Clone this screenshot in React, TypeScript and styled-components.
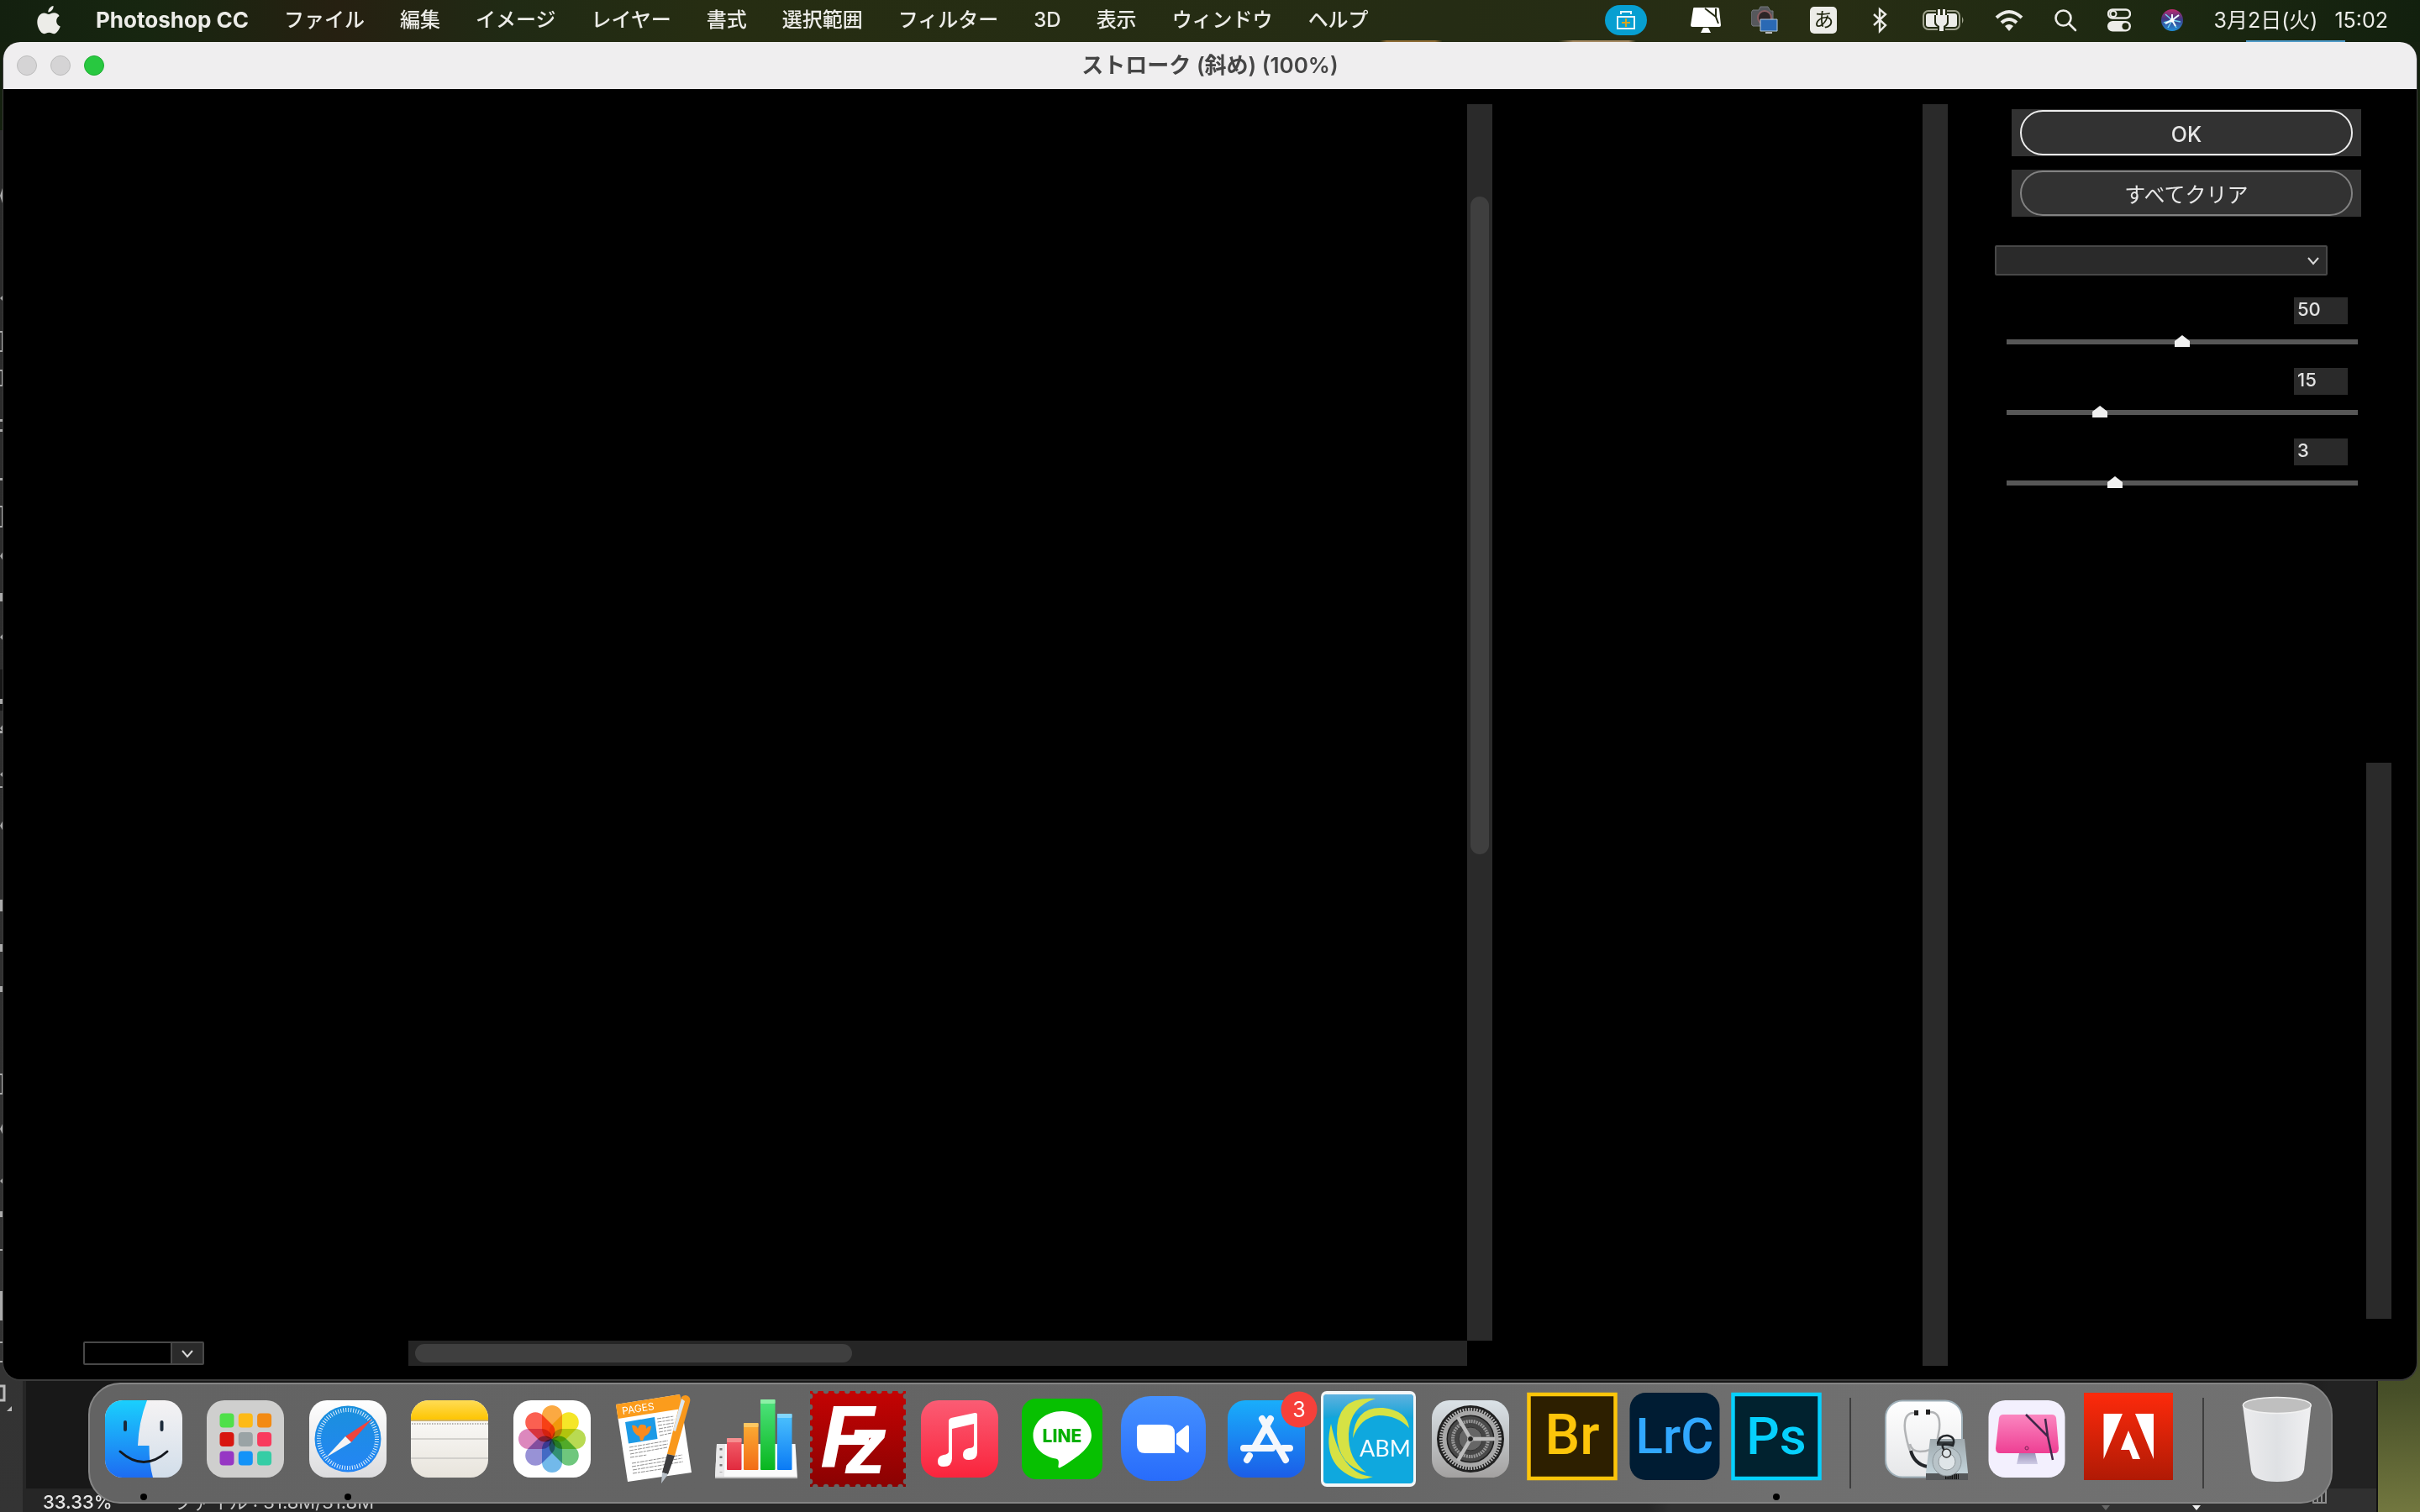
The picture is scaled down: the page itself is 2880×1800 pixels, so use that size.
import React from "react";
import styled, { createGlobalStyle } from "styled-components";

const Global = createGlobalStyle`
  *, *::before, *::after { box-sizing: border-box; }
  body {
    margin: 0;
    background: #16220f;
    font-family: Inter, "Noto Sans CJK JP", sans-serif;
    overflow: hidden;
  }
  button, input, select { font: inherit; color: inherit; margin: 0; }
`;

/* ---------- desktop ---------- */

const Desktop = styled.div`
  position: relative;
  display: grid;
  grid-template-rows: 50px minmax(0, 1fr) 158px;
  height: 100vh;
  background: linear-gradient(180deg, #14200f 0%, #1b2812 50%, #2a3517 80%, #474f28 92%, #72773f 100%);
`;

const AppBehind = styled.div`
  position: absolute;
  inset: 155px 50px 0 0;
  display: grid;
  grid-template-columns: 27px minmax(0, 1fr);
  background: #1b1b1b;
  border-right: 2px solid #121212;
`;

const ToolStrip = styled.div`
  background: linear-gradient(180deg, #2a2a2a, #343434);
  svg { display: block; }
`;

const CanvasBehind = styled.div`
  display: flex;
  flex-direction: column;
  justify-content: flex-end;
  border-left: 4px solid #262626;
  background: linear-gradient(90deg, #181818 96%, #222222 98%);
`;

const StatusBar = styled.div`
  display: flex;
  align-items: center;
  height: 28px;
  padding: 4px 0 0 20px;
  gap: 73px;
  background: linear-gradient(90deg, #262626 0 69%, #303030 70%);
  color: #c8c8c8;
  font-size: 22px;
  line-height: 24px;
  white-space: nowrap;
  strong { font-weight: 500; color: #e6e6e6; }
  svg { margin-left: auto; }
`;

/* ---------- menu bar ---------- */

const MenuBar = styled.header`
  position: relative;
  display: flex;
  justify-content: space-between;
  align-items: center;
  padding: 0 38px 2px 44px;
  background:
    linear-gradient(90deg, transparent 57%, #8d6c35 57.3% 59.3%, transparent 59.6% 64.4%, #a58a62 65% 67.3%, transparent 67.6% 92.8%, #4f9bc8 92.8% 96.9%, transparent 96.9%) 0 100% / 100% 2px no-repeat,
    linear-gradient(90deg, #13200f 0%, #172610 6%, #262011 14%, #202a14 21%, #262d12 29%, #252c14 60%, #282e14 75%, #1c2811 90%, #12200e 100%);
  color: #ecece8;
`;

const Menus = styled.nav`
  display: flex;
  align-items: center;
  gap: 42px;
`;

const MenuItem = styled.button<{ $strong?: boolean }>`
  padding: 0;
  border: 0;
  background: none;
  font-size: ${(p) => (p.$strong ? 26 : 24)}px;
  font-weight: ${(p) => (p.$strong ? 700 : 500)};
  line-height: 36px;
  white-space: nowrap;
  svg { display: block; }
`;

const StatusItems = styled.div`
  display: flex;
  align-items: center;
  gap: 36px;
  svg { display: block; }
`;

const ToolkitPill = styled.span`
  display: grid;
  place-items: center;
  width: 50px;
  height: 36px;
  margin-right: 16px;
  border-radius: 18px;
  background: #079fd1;
`;

const InputMode = styled.span`
  display: grid;
  place-items: center;
  width: 32px;
  height: 32px;
  border-radius: 5px;
  background: #ecece8;
  color: #20260f;
  font-size: 24px;
  line-height: 30px;
`;

const Clock = styled.time`
  display: flex;
  gap: 20px;
  font-size: 25px;
  line-height: 36px;
  white-space: nowrap;
`;

/* ---------- dialog window ---------- */

const Window = styled.section`
  position: relative;
  display: flex;
  flex-direction: column;
  min-height: 0;
  margin: 0 4px;
  border-radius: 20px;
  overflow: hidden;
  background: #000;
  box-shadow: 0 1px 0 1px #3a3a3a;
`;

const TitleBar = styled.div`
  display: grid;
  grid-template-columns: 1fr auto 1fr;
  align-items: center;
  height: 56px;
  flex: none;
  padding: 0 16px;
  background: #efeeef;
`;

const Lights = styled.div`
  display: flex;
  gap: 16px;
`;

const Light = styled.button<{ $on?: boolean }>`
  width: 24px;
  height: 24px;
  padding: 0;
  border-radius: 50%;
  border: 1px solid ${(p) => (p.$on ? "#1fae33" : "#bcbcbc")};
  background: ${(p) => (p.$on ? "#28c840" : "#d5d4d5")};
`;

const Title = styled.h1`
  margin: 0;
  color: #454545;
  font-size: 26px;
  font-weight: 600;
  line-height: 36px;
`;

const Body = styled.div`
  flex: 1;
  min-height: 0;
  display: grid;
  grid-template-columns: minmax(0, 1fr) 542px 558px;
  padding: 18px 0 16px;
`;

const Preview = styled.div`
  display: grid;
  grid-template: minmax(0, 1fr) 30px / minmax(0, 1fr) 30px;
`;

const PreviewFooter = styled.div`
  display: flex;
  align-items: center;
  gap: 243px;
  padding-left: 95px;
`;

const TrackV = styled.div<{ $rows?: string }>`
  display: grid;
  grid-template-rows: ${(p) => p.$rows ?? "1fr"};
  width: 30px;
  height: 100%;
  padding: 0 4px;
  background: #2a2a2a;
`;

const TrackH = styled.div`
  display: grid;
  flex: 1;
  grid-template-columns: 520fr 728fr;
  height: 30px;
  padding: 4px 4px 4px 8px;
  background: #252525;
`;

const Thumb = styled.div`
  grid-row: 2;
  border-radius: 11px;
  background: #3f3f3f;
`;

const ThumbH = styled(Thumb)`
  grid-row: 1;
`;

const EffectList = styled.div`
  display: flex;
  justify-content: flex-end;
`;

const SelectBox = styled.div<{ $small?: boolean }>`
  display: grid;
  grid-template-columns: minmax(0, 1fr) ${(p) => (p.$small ? 38 : 30)}px;
  width: ${(p) => (p.$small ? 144 : 396)}px;
  height: ${(p) => (p.$small ? 28 : 36)}px;
  border: 2px solid #484848;
  border-radius: 2px;
  background: ${(p) => (p.$small ? "#000" : "#2a2a2a")};
  select {
    grid-area: 1 / 1 / 2 / 3;
    appearance: none;
    width: 100%;
    padding: 0 6px;
    border: 0;
    background: none;
    color: #e6e6e6;
    font-size: 20px;
  }
  svg {
    grid-area: 1 / 2;
    width: 100%;
    height: 100%;
    pointer-events: none;
    background: #2a2a2a;
    border-left: ${(p) => (p.$small ? "2px solid #484848" : "0")};
  }
`;

/* ---------- controls ---------- */

const Controls = styled.form`
  display: flex;
  flex-direction: column;
  padding: 6px 66px 0 56px;
  color: #e2e2e2;
`;

const ButtonPlate = styled.div`
  align-self: flex-end;
  width: 416px;
  height: 56px;
  margin-bottom: 16px;
  padding: 1px 10px;
  background: #323232;
`;

const PillButton = styled.button<{ $primary?: boolean }>`
  display: block;
  width: 100%;
  height: 54px;
  padding: 3px 0 0;
  border: 2px solid ${(p) => (p.$primary ? "#ededed" : "#828282")};
  border-radius: 27px;
  background: #323232;
  color: #e8e8e8;
  font-size: 25px;
  font-weight: ${(p) => (p.$primary ? 500 : 400)};
  line-height: 40px;
`;

const SelectRow = styled.div`
  margin: 18px 0 26px;
`;

const SliderGroup = styled.div`
  display: flex;
  flex-direction: column;
  align-items: flex-end;
  height: 84px;
`;

const ValueInput = styled.input`
  width: 64px;
  height: 32px;
  margin-right: 16px;
  padding: 0 0 4px 4px;
  border: 0;
  border-radius: 0;
  background: #2a2a2a;
  font-size: 22px;
  font-weight: 500;
  line-height: 28px;
`;

const Range = styled.input`
  appearance: none;
  width: 418px;
  height: 14px;
  margin: 13px 4px 0 0;
  background: linear-gradient(#575757, #575757) 0 5px / 100% 6px no-repeat;
  align-self: flex-end;
  &::-webkit-slider-thumb {
    appearance: none;
    width: 18px;
    height: 14px;
    border: 0;
    background: #f0f0f0;
    clip-path: polygon(50% 0, 100% 50%, 100% 100%, 0 100%, 0 50%);
  }
`;

const StackArea = styled.div`
  flex: 1;
  display: flex;
  justify-content: flex-end;
  margin: 302px -36px 56px 0;
`;

/* ---------- dock ---------- */

const DockArea = styled.footer`
  position: relative;
  padding: 4px 104px 10px 105px;
`;

const DockBar = styled.div`
  display: flex;
  height: 144px;
  padding: 5px 3px 0;
  border: 2px solid #858585;
  border-radius: 38px;
  background: linear-gradient(90deg, #636363 0%, #656565 55%, #6f6f6f 75%, #717171 100%);
`;

const Slot = styled.button`
  flex: 1;
  min-width: 0;
  display: flex;
  flex-direction: column;
  align-items: center;
  padding: 0;
  border: 0;
  background: none;
  svg { display: block; flex: none; overflow: visible; }
`;

const Running = styled.span`
  width: 8px;
  height: 8px;
  margin-top: 5px;
  border-radius: 50%;
  background: #000;
`;

const Divider = styled.span`
  flex: none;
  width: 55px;
  height: 108px;
  margin-top: 11px;
  background: linear-gradient(#3e3e3e, #3e3e3e) center / 2px 100% no-repeat;
`;

/* ---------- small drawings ---------- */

const Chevron = ({ w }: { w: number }) => (
  <svg viewBox={`0 0 ${w} 24`} fill="none" stroke="#d8d8d8" strokeWidth="2">
    <path d={`M${w / 2 - 6} 9l6 7 6-7`} />
  </svg>
);

const stripMarks: [number, number, string][] = [
  [221, 24, "t"], [351, 8, "t"], [394, 25, "b"], [440, 20, "b"], [499, 3, "f"], [511, 3, "f"],
  [569, 3, "f"], [602, 26, "b"], [656, 12, "t"], [706, 10, "f"], [754, 9, "t"], [832, 6, "f"],
  [862, 10, "t"], [870, 3, "f"], [918, 8, "t"], [936, 2, "f"], [976, 14, "t"], [1071, 14, "f"],
  [1124, 9, "f"], [1174, 7, "f"], [1278, 25, "b"], [1336, 16, "t"], [1402, 8, "t"], [1442, 7, "f"],
  [1487, 2, "f"], [1537, 35, "f"], [1597, 2, "f"], [1620, 2, "f"],
];

const StripDrawing = () => (
  <svg width="27" height="1645" viewBox="0 155 27 1645">
    <path d="M0 797h4v49H0z" fill="#171717" />
    {stripMarks.map(([y, h, kind]) =>
      kind === "b" ? (
        <path key={y} d={`M0 ${y + 1}h3v${h - 2}H0`} fill="none" stroke="#aaa" strokeWidth="2" />
      ) : kind === "t" ? (
        <path key={y} d={`M4 ${y}v${h}L0 ${y + h / 2}z`} fill="#aaa" />
      ) : (
        <path key={y} d={`M0 ${y}h4v${h}H0z`} fill="#aaa" />
      )
    )}
    <path d="M0 1650h5v17H0" fill="none" stroke="#bbb" strokeWidth="3" />
    <path d="M14 1674v6H8z" fill="#bbb" />
  </svg>
);

const AppleIcon = () => (
  <svg width="28" height="34" viewBox="0 0 28 34" fill="#ecece8">
    <path d="M19.6 0c.3 3.600-2.900 7.600-6.300 7.500C12.900 4 16.200.4 19.600 0z" />
    <path d="M14 10c1.600 0 3.500-1.700 6.400-1.700 2.600 0 4.900 1.400 6.200 3.600-5.200 3-4.300 10.600 1.200 12.600-1.200 3.400-4.300 8.600-7.400 8.700-2.300.1-3.200-1.500-6-1.500s-3.800 1.500-6 1.500C4.800 33.200.3 25.900.3 19.300.3 12.700 4.200 8.600 8.400 8.400c2.400 0 4 1.600 5.600 1.600z" />
  </svg>
);

const statusIcons = {
  clean: (
    <svg width="36" height="32" viewBox="0 0 36 32">
      <path d="M4 1h28q2 0 2 2l2 19q0 2-2 2H2q-2 0-2-2L3 3q0-2 1-2zM15 25h6l3 6H12z" fill="#fff" />
      <path d="M17 2l13 10M30 2v10l3 8" fill="none" stroke="#242b13" strokeWidth="2" />
    </svg>
  ),
  camera: (
    <svg width="34" height="34" viewBox="0 0 34 34">
      <path d="M2 5h7l2-4h9l3 5h3v18H2q-2-2-2-4V8z" fill="#56585c" stroke="#777b80" />
      <circle cx="16" cy="14" r="8" fill="#2c2526" stroke="#8c5e62" strokeWidth="2" />
      <path d="M11 16h20v14H11z" fill="#2a69b4" stroke="#b6cbe0" />
      <path d="M17 31h8v2h-8z" fill="#bbb" />
    </svg>
  ),
  bluetooth: (
    <svg width="30" height="32" viewBox="0 0 30 32" fill="none" stroke="#ecece8" strokeWidth="2.400">
      <path d="M8 9l14 13-7 7V3l7 6L8 22" />
    </svg>
  ),
  battery: (
    <svg width="50" height="28" viewBox="0 0 50 28">
      <rect x="1" y="3" width="43" height="22" rx="6" fill="none" stroke="#a0a38e" strokeWidth="2" />
      <rect x="4" y="6" width="37" height="16" rx="3" fill="#ecece8" />
      <path d="M16 0h13v8h2v9q0 3-4 5v5h-9v-5q-4-2-4-5V8h2z" fill="#262c14" />
      <path d="M18 1h3v7h3V1h3v7h2v8q0 3-4 5v6h-5v-6q-4-2-4-5V8h2z" fill="#ecece8" />
      <path d="M47 10q3 4 0 8z" fill="#a0a38e" />
    </svg>
  ),
  wifi: (
    <svg width="34" height="26" viewBox="0 0 34 26" fill="none" stroke="#ecece8" strokeWidth="4">
      <path d="M2 10q15-14 30 0M8 16q9-8 18 0" />
      <path d="M12 20q5-4 10 0l-5 6z" fill="#ecece8" stroke="none" />
    </svg>
  ),
  search: (
    <svg width="28" height="28" viewBox="0 0 28 28" fill="none" stroke="#ecece8" strokeWidth="2.600">
      <circle cx="11.500" cy="11.500" r="9" />
      <path d="M18 18l8 8" strokeLinecap="round" />
    </svg>
  ),
  control: (
    <svg width="28" height="28" viewBox="0 0 28 28">
      <rect x="1" y="1.500" width="26" height="10" rx="5" fill="none" stroke="#ecece8" strokeWidth="2.400" />
      <circle cx="7" cy="6.500" r="3.500" fill="none" stroke="#ecece8" strokeWidth="2" />
      <rect x="0" y="15" width="28" height="12.500" rx="6.200" fill="#ecece8" />
      <circle cx="21.500" cy="21.200" r="4" fill="#20290f" />
    </svg>
  ),
  siri: (
    <svg width="26" height="26" viewBox="0 0 26 26">
      <defs>
        <linearGradient id="siri" x1="0" y1="0" x2="0" y2="1">
          <stop offset="0" stopColor="#c22a6e" />
          <stop offset=".45" stopColor="#3f3a86" />
          <stop offset="1" stopColor="#1f8fd8" />
        </linearGradient>
      </defs>
      <circle cx="13" cy="13" r="13" fill="url(#siri)" />
      <path d="M13 13L5 6M13 13L3 16M13 13l-5 9M13 13l5 9M13 13l10 2M13 13l8-6" stroke="#6fd6f2" strokeWidth="1.500" />
      <path d="M13 13l8-6M13 13l-8 4M13 13l4 7M13 13V6" stroke="#f2ffff" strokeWidth="2" />
      <circle cx="13" cy="13" r="2.500" fill="#fff" />
    </svg>
  ),
};

/* ---------- dock icons ---------- */

const Grad = ({ id, a, b }: { id: string; a: string; b: string }) => (
  <linearGradient id={id} x1="0" y1="0" x2="0" y2="1">
    <stop offset="0" stopColor={a} />
    <stop offset="1" stopColor={b} />
  </linearGradient>
);

const Icon = ({ children }: { children: React.ReactNode }) => (
  <svg width="120" height="120" viewBox="0 0 120 120">{children}</svg>
);

const Tile = ({ fill }: { fill: string }) => <rect x="14" y="14" width="92" height="92" rx="21" fill={fill} />;

const Finder = () => (
  <Icon>
    <defs>
      <Grad id="fa" a="#1ad0fd" b="#1d6cf2" />
      <Grad id="fb" a="#f5f3f4" b="#d2deea" />
      <clipPath id="fc"><rect x="14" y="14" width="92" height="92" rx="21" /></clipPath>
    </defs>
    <Tile fill="url(#fb)" />
    <path clipPath="url(#fc)" d="M14 14h50Q54 40 53 68h13.500Q66.500 90 71 106H14z" fill="url(#fa)" />
    <path d="M38 40v9M81.500 40v9" stroke="#1b2a3a" strokeWidth="4" strokeLinecap="round" />
    <path d="M32 75q28 25 56 0" fill="none" stroke="#14181e" strokeWidth="3" strokeLinecap="round" />
  </Icon>
);

const launchColors = ["#4fe04a", "#fdba16", "#f38a12", "#d8160f", "#9aa3a5", "#f93a5d", "#9637c4", "#1393f8", "#35cda5"];
const Launchpad = () => (
  <Icon>
    <Tile fill="#cfcfce" />
    {launchColors.map((c, i) => (
      <rect key={c} x={29.500 + (i % 3) * 22.300} y={29.500 + Math.floor(i / 3) * 22.500} width="17" height="17" rx="4" fill={c} />
    ))}
  </Icon>
);

const Safari = () => (
  <Icon>
    <defs><Grad id="sa" a="#fff" b="#dcdcde" /><Grad id="sb" a="#1a90dc" b="#2485f5" /></defs>
    <Tile fill="url(#sa)" />
    <circle cx="60" cy="60" r="39.500" fill="url(#sb)" />
    <circle cx="60" cy="60" r="34.500" fill="none" stroke="#e3f1fc" strokeWidth="5" strokeDasharray="1 2.010" />
    <path d="M89 36L64 64l-7-7z" fill="#f0443c" />
    <path d="M34 82l23-25 7 7z" fill="#f4f4f4" />
  </Icon>
);

const Notes = () => (
  <Icon>
    <defs>
      <Grad id="na" a="#fff" b="#e8e4dc" /><Grad id="nb" a="#ffdc55" b="#fdc502" />
      <clipPath id="nc"><rect x="14" y="14" width="92" height="92" rx="21" /></clipPath>
    </defs>
    <Tile fill="url(#na)" />
    <g clipPath="url(#nc)">
      <path d="M14 14h92v23H14z" fill="url(#nb)" />
      <path d="M14 38h92" stroke="#c79f2e" strokeWidth="1.500" />
      <path d="M15 42h92" stroke="#b5b3ae" strokeWidth="2" strokeDasharray="1.500 1.500" />
      <path d="M14 60h92M14 83h92" stroke="#c9c7c4" strokeWidth="1.500" />
    </g>
  </Icon>
);

const petals = ["#fba02d", "#f4e410", "#b2d63f", "#5fc16f", "#63b1e8", "#8d86d2", "#d97bb6", "#fb4f3e"];
const Photos = () => (
  <Icon>
    <Tile fill="#fff" />
    {petals.map((c, i) => (
      <rect key={c} x="48" y="20" width="24" height="40" rx="12" fill={c} opacity=".9"
        transform={`rotate(${i * 45} 60 60)`} style={{ mixBlendMode: "multiply" }} />
    ))}
  </Icon>
);

const Pages = () => (
  <Icon>
    <path d="M15 19l76-12 14 93-76 11z" fill="#fff" />
    <path d="M15 19l76-12 2.500 17L17.500 36z" fill="#fb9c1c" />
    <text x="23" y="31" fontSize="12" fill="#fff" fontFamily="Inter, sans-serif" transform="rotate(-9 23 31)">PAGES</text>
    <path d="M26 40l35-6 3.500 26L30 65.500z" fill="#1c9ae6" />
    <path d="M34 44q5-1 7 4 2-6 6-5 5 0 4 5 3-4 6-3-1 9-8 12l-2 5h-3l-1-5q-8-3-9-13z" fill="#f98a1c" />
    <g stroke="#8f8f8f" strokeWidth="1" strokeDasharray="5 1 3 1">
      <path d="M64 36l20-3M64.500 40l20-3M65 44l19-3M66 48l17-3M66 52l16-3M67 56l14-3M31 70l46-8M31 74l46-8M32 78l44-8M32 82l20-3M34 89l60-10M34 93l60-10M35 97l60-10M35 101l40-6" />
    </g>
    <path d="M93 10q5-4 9 0 2 2 1 6L85 80l-9-2z" fill="#f9981b" />
    <path d="M93 12L83 50l3 1 11-36z" fill="#dbe6f0" />
    <path d="M76 78l9 2-8 22-7-2z" fill="#3c3c3e" />
    <path d="M70 100l7 2-8 11z" fill="#b8c0c8" />
  </Icon>
);

const bars: [number, number, string, string, string][] = [
  [25, 59, "#f2606b", "#e12a3e", "#f58f90"],
  [45, 41, "#fcae35", "#f26c16", "#fdc863"],
  [65, 13, "#4fe37e", "#08b61e", "#8cf0a6"],
  [85, 30, "#4dc3fd", "#0a7af5", "#82d6fc"],
];
const Numbers = () => (
  <Icon>
    <path d="M13 66h93.500l2.500 41H11z" fill="#fbfbfb" />
    <path d="M11 105h98v2H11z" fill="#c4c4c4" />
    <path d="M13 66h10l-1 39H11z" fill="#e9e9ea" />
    <path d="M18 71v29" stroke="#777" strokeWidth="3" strokeDasharray="2.500 7" />
    {bars.map(([x, y, a, b, top], i) => (
      <g key={x}>
        <defs><Grad id={`nu${i}`} a={a} b={b} /></defs>
        <rect x={x} y={y} width="17.500" height={97 - y} rx="1" fill={`url(#nu${i})`} />
        <rect x={x} y={y} width="17.500" height="5" rx="1" fill={top} />
      </g>
    ))}
  </Icon>
);

const FileZilla = () => (
  <Icon>
    <defs><Grad id="fz" a="#c40303" b="#8a0202" /></defs>
    <rect x="3" y="3" width="114" height="114" fill="url(#fz)" />
    <rect x="3" y="3" width="114" height="114" fill="none" stroke="#656565" strokeWidth="6.500" strokeLinecap="round" strokeDasharray="0 12.667" strokeDashoffset="-6.330" />
    <text x="15" y="94" fontSize="106" fill="#fff" fontFamily="'Liberation Sans', sans-serif" fontWeight="700" fontStyle="italic">
      F<tspan x="45" y="101" fontSize="98">z</tspan>
    </text>
  </Icon>
);

const Music = () => (
  <Icon>
    <defs><Grad id="mu" a="#fb5c74" b="#fa243c" /></defs>
    <Tile fill="url(#mu)" />
    <path d="M47 39q0-3 3-4l28-6q3-.5 3 2v45q0 9-10 9-7 0-7-6 0-7 7-8 6 0 6-4V42l-26 6v35q0 10-10 10-7 0-7-6 0-7 7-8 6-1 6-4z" fill="#fff" />
  </Icon>
);

const Line = () => (
  <Icon>
    <rect x="12" y="12" width="96" height="96" rx="17" fill="#07c001" />
    <path d="M60 27c19 0 35 12.500 35 29 0 15-20 28-37 38-2 1-3 0-2.500-2 .8-5 .6-8-3-8.500C37 81 25.500 70 25.500 56c0-16.500 15.500-29 34.500-29z" fill="#fff" />
    <text x="60" y="64" textAnchor="middle" fontSize="21" fontWeight="800" fill="#07b001" fontFamily="Inter, sans-serif">LINE</text>
  </Icon>
);

const ZoomApp = () => (
  <Icon>
    <defs><Grad id="zo" a="#4591ff" b="#286cfb" /></defs>
    <rect x="9" y="9" width="101" height="101" rx="35" fill="url(#zo)" />
    <path d="M32 43h31q10 0 10 10v24H38q-10 0-10-10V47q0-4 4-4zM75 54l12-10q3-1 3 2v28q0 3-3 2L75 66z" fill="#fff" />
  </Icon>
);

const AppStore = () => (
  <Icon>
    <defs><Grad id="as" a="#19aefb" b="#1b5de8" /></defs>
    <Tile fill="url(#as)" />
    <g stroke="#f4f7fc" strokeWidth="8" strokeLinecap="round">
      <path d="M65 36L46 70M40 80l-3 5M55 36l28 49M33 71h34M80 71h8" />
    </g>
    <circle cx="99" cy="25" r="21.500" fill="#f6403a" />
    <text x="99" y="34" textAnchor="middle" fontSize="25" fill="#fff" fontFamily="Inter, sans-serif">3</text>
  </Icon>
);

const Abm = () => (
  <Icon>
    <defs><Grad id="ab" a="#5fb2df" b="#12a3d8" /></defs>
    <rect x="4" y="3" width="113" height="114" rx="7" fill="#f4f6f7" />
    <rect x="7" y="7" width="107" height="106" rx="4" fill="#0fa8de" />
    <path d="M7 36q50-12 107 0V11q0-4-4-4H11q-4 0-4 4z" fill="url(#ab)" />
    <g fill="#d6e244">
      <path d="M69 12Q22 8 23 54q1 38 35 46-22-16-21-46 1-32 32-42z" />
      <path d="M16 42q-12 50 30 65 10 2 20-2-38-2-50-63z" />
      <path d="M42 59q2-38 36-36 28 3 31 24-14-15-36-15-22 2-31 27z" />
    </g>
    <text x="50" y="81" fontSize="27" fill="#f7fbfd" fontFamily="Lato, sans-serif">ABM</text>
  </Icon>
);

const Prefs = () => (
  <Icon>
    <defs><Grad id="pr" a="#dbe3e8" b="#a3a1a0" /></defs>
    <Tile fill="url(#pr)" />
    <circle cx="60" cy="60" r="40" fill="#202020" />
    <circle cx="60" cy="60" r="35" fill="none" stroke="#b5b5b5" strokeWidth="4" strokeDasharray="1.800 1.500" />
    <circle cx="60" cy="60" r="31" fill="none" stroke="#a8a8a8" strokeWidth="5" />
    <circle cx="60" cy="60" r="27" fill="#4a4a4a" />
    <circle cx="60" cy="60" r="21" fill="#454545" stroke="#989898" strokeWidth="4" strokeDasharray="2 1" />
    <circle cx="60" cy="60" r="14" fill="#666" stroke="#333" />
    <path d="M60 60h29M60 60L45 34M60 60L45 86" stroke="#bdbdbd" strokeWidth="4.500" />
    <circle cx="60" cy="60" r="3.500" fill="#222" stroke="#bbb" />
  </Icon>
);

const AdobeTile = ({ label, size, ink, bg, round, y }: { label: string; size: number; ink: string; bg: string; round?: boolean; y: number }) => (
  <Icon>
    {round ? (
      <rect x="6.500" y="5" width="107" height="104" rx="19" fill={bg} />
    ) : (
      <rect x="8.500" y="7" width="103" height="100" fill={bg} stroke={ink} strokeWidth="4.500" />
    )}
    <text x="60" y={y} textAnchor="middle" fontSize={size} fontWeight="500" fill={ink} fontFamily="Roboto, sans-serif">{label}</text>
  </Icon>
);

const DiskUtility = () => (
  <Icon>
    <defs><Grad id="du" a="#fff" b="#e6e7e9" /><Grad id="dv" a="#9fa9ae" b="#c9dbe2" /></defs>
    <rect x="13" y="14.500" width="91" height="91" rx="20" fill="url(#du)" stroke="#9fb0b9" strokeWidth="2" />
    <path d="M48 29q-14-1-12 20 2 14 6 25M65 28q14-1 12 20l-4 22M42 66q2 9 12 9 14 0 18-9" fill="none" stroke="#b2b4b6" strokeWidth="2.500" />
    <path d="M47 26h5v6h-5zM61 25h5v6h-5z" fill="#222" />
    <path d="M43 74q4 16 20 19" fill="none" stroke="#23262a" strokeWidth="4" />
    <path d="M66 60h41l4 40v9H61v-9z" fill="url(#dv)" />
    <path d="M61 101h50v8H61z" fill="#55585a" />
    <path d="M84 105h16" stroke="#111" strokeWidth="6" strokeDasharray="1.500 1" />
    <circle cx="86" cy="87" r="17" fill="#b9c4c9" stroke="#8d979c" />
    <circle cx="86" cy="87" r="10" fill="#dfe5e8" stroke="#929a9e" />
    <path d="M74 63h20v5H74z" fill="#33383b" />
    <path d="M75 66q2-11 12-10 10 2 6 12-14-4-12 2l4 8" fill="none" stroke="#23262a" strokeWidth="2.500" />
    <circle cx="85.500" cy="77" r="5" fill="#dfe5e8" stroke="#333" strokeWidth="1.500" />
  </Icon>
);

const CleanMyMac = () => (
  <Icon>
    <defs><Grad id="cm" a="#fb86c0" b="#ee3f93" /><Grad id="cs" a="#9b93b8" b="#cfcce6" /></defs>
    <rect x="14.500" y="14" width="91" height="92" rx="20" fill="#f3f0fe" />
    <path d="M51 77h19l3 13H48z" fill="url(#cs)" />
    <path d="M32 31h58q4 0 5 4l3 36q0 6-5 6H28q-5 0-5-6l4-36q1-4 5-4z" fill="url(#cm)" />
    <path d="M59 31l26 26M82 36l3 21 6 28" fill="none" stroke="#40284a" strokeWidth="2.500" />
    <circle cx="60" cy="71" r="2" fill="none" stroke="#7a2357" />
  </Icon>
);

const Adobe = () => (
  <Icon>
    <defs><Grad id="ad" a="#fd2a0b" b="#b01a05" /></defs>
    <path d="M6 5h106v104H6z" fill="url(#ad)" />
    <path d="M29.500 30H52L29.500 84zM67 30h22v54zM59 50l14 34h-9l-4-11H50z" fill="#fff" />
  </Icon>
);

const Trash = () => (
  <Icon>
    <defs>
      <linearGradient id="tr"><stop offset="0" stopColor="#ececee" /><stop offset=".5" stopColor="#dfe1e4" /><stop offset="1" stopColor="#f0f0f2" /></linearGradient>
    </defs>
    <path d="M19 20l10 77q2 14 31 14t32-14l8.500-77z" fill="url(#tr)" />
    <ellipse cx="59.800" cy="20" rx="40.500" ry="9.500" fill="#bfbfbf" stroke="#f2f2f2" strokeWidth="1.500" />
  </Icon>
);

type DockEntry = { name: string; icon: React.ReactNode; running?: boolean } | null;

const dock: DockEntry[] = [
  { name: "Finder", icon: <Finder />, running: true },
  { name: "Launchpad", icon: <Launchpad /> },
  { name: "Safari", icon: <Safari />, running: true },
  { name: "メモ", icon: <Notes /> },
  { name: "写真", icon: <Photos /> },
  { name: "Pages", icon: <Pages /> },
  { name: "Numbers", icon: <Numbers /> },
  { name: "FileZilla", icon: <FileZilla /> },
  { name: "ミュージック", icon: <Music /> },
  { name: "LINE", icon: <Line /> },
  { name: "Zoom", icon: <ZoomApp /> },
  { name: "App Store", icon: <AppStore /> },
  { name: "ABM", icon: <Abm /> },
  { name: "システム環境設定", icon: <Prefs /> },
  { name: "Bridge", icon: <AdobeTile label="Br" size={66} ink="#fdc50a" bg="#2d1f00" y={78} /> },
  { name: "Lightroom Classic", icon: <AdobeTile label="LrC" size={60} ink="#31a8ff" bg="#001c33" round y={77} /> },
  { name: "Photoshop", icon: <AdobeTile label="Ps" size={62} ink="#06d0fd" bg="#01222f" y={78} />, running: true },
  null,
  { name: "ディスクユーティリティ", icon: <DiskUtility /> },
  { name: "CleanMyMac", icon: <CleanMyMac /> },
  { name: "Adobe", icon: <Adobe /> },
  null,
  { name: "ゴミ箱", icon: <Trash /> },
];

const menus = ["ファイル", "編集", "イメージ", "レイヤー", "書式", "選択範囲", "フィルター", "3D", "表示", "ウィンドウ", "ヘルプ"];

const sliders = [
  { label: "方向のバランス", value: 50, min: 0, max: 100 },
  { label: "ストロークの長さ", value: 15, min: 3, max: 50 },
  { label: "シャープ", value: 3, min: 0, max: 10 },
];

export default function App() {
  const [values, setValues] = React.useState(sliders.map((s) => s.value));
  const update = (i: number, v: number) => setValues(values.map((old, n) => (n === i ? v : old)));

  return (
    <Desktop>
      <Global />
      <AppBehind>
        <ToolStrip><StripDrawing /></ToolStrip>
        <CanvasBehind>
          <StatusBar>
            <strong>33.33%</strong>
            <span>ファイル : 31.8M/31.8M</span>
            <svg width="330" height="28" viewBox="0 0 330 28">
              <path d="M3 18h10l-5 6z" fill="#666" />
              <path d="M111 18h10l-5 6z" fill="#eee" />
              <path d="M255 0v15h15V0M260 2v12M265 0v14" fill="none" stroke="#8d8d8d" strokeWidth="2" />
            </svg>
          </StatusBar>
        </CanvasBehind>
      </AppBehind>

      <MenuBar>
        <Menus>
          <MenuItem aria-label="アップルメニュー"><AppleIcon /></MenuItem>
          <MenuItem $strong>Photoshop CC</MenuItem>
          {menus.map((m) => <MenuItem key={m}>{m}</MenuItem>)}
        </Menus>
        <StatusItems>
          <ToolkitPill>
            <svg width="24" height="22" viewBox="0 0 24 22" fill="none" stroke="#e6f6fb" strokeWidth="2">
              <path d="M6 4V1h12v3M2 7h20v14H2z" />
              <path d="M12 9v10M7 14h10" stroke="#d9a520" />
            </svg>
          </ToolkitPill>
          {statusIcons.clean}
          {statusIcons.camera}
          <InputMode>あ</InputMode>
          {statusIcons.bluetooth}
          {statusIcons.battery}
          {statusIcons.wifi}
          {statusIcons.search}
          {statusIcons.control}
          {statusIcons.siri}
          <Clock><span>3月2日(火)</span><span>15:02</span></Clock>
        </StatusItems>
      </MenuBar>

      <Window>
        <TitleBar>
          <Lights>
            <Light aria-label="閉じる" />
            <Light aria-label="しまう" />
            <Light $on aria-label="拡大" />
          </Lights>
          <Title>ストローク (斜め) (100%)</Title>
        </TitleBar>
        <Body>
          <Preview>
            <div />
            <TrackV $rows="110fr 783fr 579fr"><Thumb /></TrackV>
            <PreviewFooter>
              <SelectBox $small>
                <select aria-label="ズーム"><option></option></select>
                <Chevron w={36} />
              </SelectBox>
              <TrackH><ThumbH /></TrackH>
            </PreviewFooter>
          </Preview>
          <EffectList><TrackV /></EffectList>
          <Controls onSubmit={(e) => e.preventDefault()}>
            <ButtonPlate><PillButton $primary>OK</PillButton></ButtonPlate>
            <ButtonPlate><PillButton type="button">すべてクリア</PillButton></ButtonPlate>
            <SelectRow>
              <SelectBox>
                <select aria-label="フィルター"><option></option></select>
                <Chevron w={30} />
              </SelectBox>
            </SelectRow>
            {sliders.map((s, i) => (
              <SliderGroup key={s.label}>
                <ValueInput aria-label={s.label} value={values[i]} onChange={(e) => update(i, Number(e.target.value) || 0)} />
                <Range type="range" aria-label={s.label} min={s.min} max={s.max} value={values[i]} onChange={(e) => update(i, Number(e.target.value))} />
              </SliderGroup>
            ))}
            <StackArea><TrackV /></StackArea>
          </Controls>
        </Body>
      </Window>

      <DockArea>
        <DockBar>
          {dock.map((d, i) =>
            d ? (
              <Slot key={d.name} aria-label={d.name}>
                {d.icon}
                {d.running && <Running />}
              </Slot>
            ) : (
              <Divider key={i} />
            )
          )}
        </DockBar>
      </DockArea>
    </Desktop>
  );
}
